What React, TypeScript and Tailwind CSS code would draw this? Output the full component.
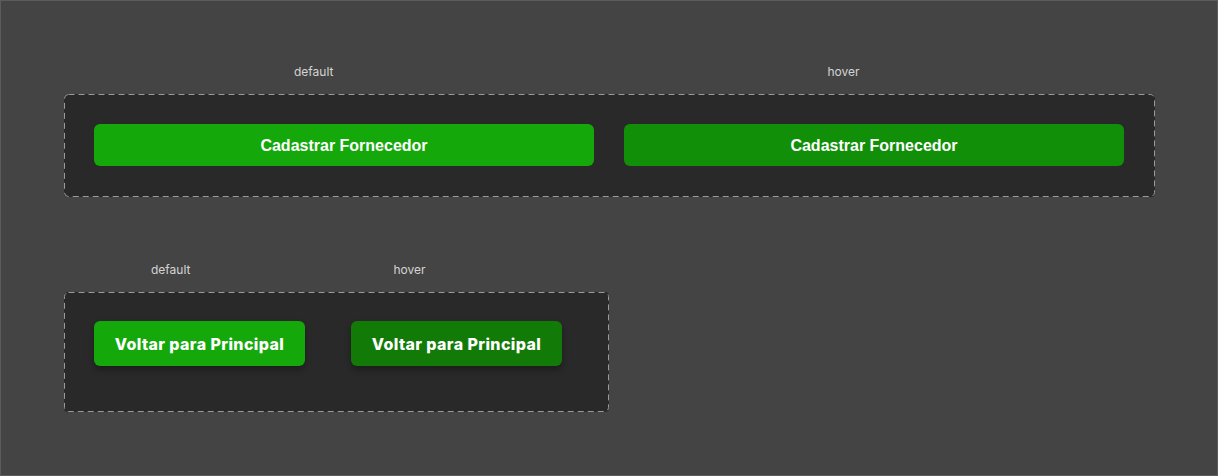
const DashedFrame = ({ w, h }: { w: number; h: number }) => (
  <svg className="absolute inset-0 pointer-events-none" width={w} height={h}>
    <rect x={0.5} y={0.5} width={w - 1} height={h - 1} rx={4} fill="none" stroke="#9a9a9a" strokeDasharray="6 4" />
  </svg>
);

const App = () => {
  return (
    <div className="w-[1218px] h-[476px] bg-[#444444] border border-[#5c5c5c] flex flex-col pl-[63px] font-['Inter',sans-serif]">
      {/* Cadastrar section */}
      <div className="flex mt-[63px] h-[16px] text-[12px] leading-[16px] text-[#d4d4d4]">
        <span className="ml-[230px]">default</span>
        <span className="ml-[494px]">hover</span>
      </div>
      <div className="relative mt-[14px] w-[1091px] h-[103px] rounded-[4px] bg-[#292929] flex gap-[30px] pl-[30px] pt-[30px]">
        <DashedFrame w={1091} h={103} />
        <button className="w-[500px] h-[42px] pt-[2px] rounded-[6px] bg-[#14a80a] text-white text-[16px] font-bold font-['Liberation_Sans',Arial,sans-serif]">
          Cadastrar Fornecedor
        </button>
        <button className="w-[500px] h-[42px] pt-[2px] rounded-[6px] bg-[#118f08] text-white text-[16px] font-bold font-['Liberation_Sans',Arial,sans-serif]">
          Cadastrar Fornecedor
        </button>
      </div>

      {/* Voltar section */}
      <div className="flex mt-[65px] h-[16px] text-[12px] leading-[16px] text-[#d4d4d4]">
        <span className="ml-[87px]">default</span>
        <span className="ml-[203px]">hover</span>
      </div>
      <div className="relative mt-[14px] w-[545px] h-[120px] rounded-[4px] bg-[#292929] flex gap-[46px] pl-[30px] pt-[29px]">
        <DashedFrame w={545} h={120} />
        <button className="w-[211px] h-[45px] rounded-[6px] bg-[#14a80a] text-white text-[16px] font-extrabold tracking-[0.4px] shadow-[0_4px_6px_rgba(0,0,0,0.3)]">
          Voltar para Principal
        </button>
        <button className="w-[211px] h-[45px] rounded-[6px] bg-[#127a07] text-white text-[16px] font-extrabold tracking-[0.4px] shadow-[0_4px_6px_rgba(0,0,0,0.3)]">
          Voltar para Principal
        </button>
      </div>
    </div>
  );
};

export default App;
